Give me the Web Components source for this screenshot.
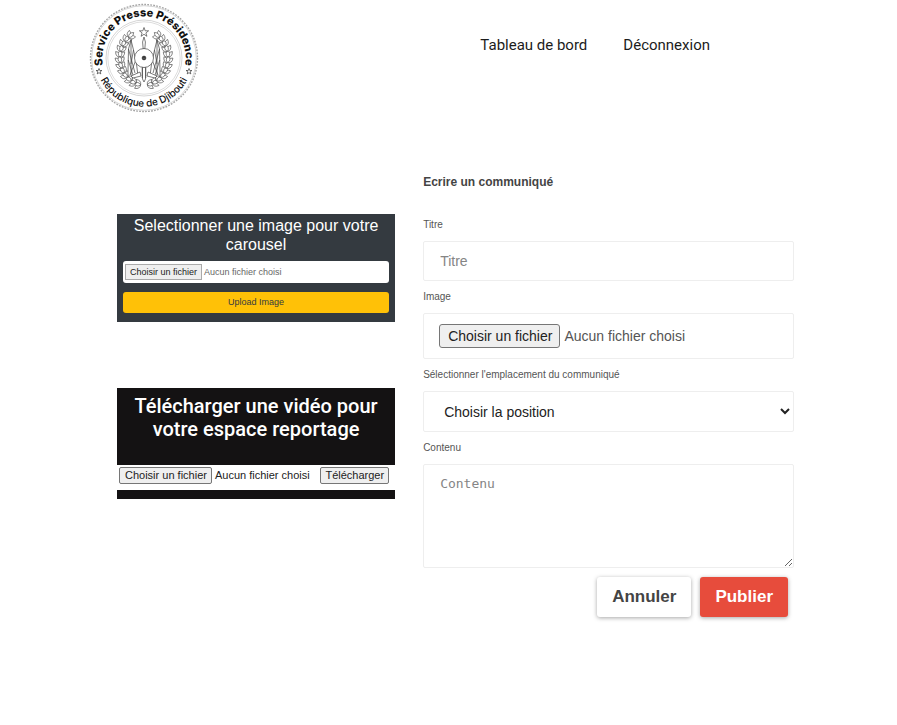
<!DOCTYPE html>
<html lang="fr">
<head>
<meta charset="utf-8">
<meta name="viewport" content="width=device-width, initial-scale=1">
<title>Service Presse Présidence</title>
<style>
  body { margin: 0; background: #fff; color: #444; font-family: "Liberation Sans", Arial, sans-serif; }
</style>
</head>
<body>
<press-page></press-page>
<script>
const define = (name, html, setup) => {
  const tpl = document.createElement('template');
  tpl.innerHTML = html;
  customElements.define(name, class extends HTMLElement {
    connectedCallback() {
      if (this.shadowRoot) return;
      const root = this.attachShadow({ mode: 'open' });
      root.append(tpl.content.cloneNode(true));
      if (setup) setup(this, root);
    }
  });
};

/* Round seal: scalloped edge, lettering on two arcs, emblem in a laurel wreath */
define('press-seal', `
<style>
  :host { display: block; width: 110px; flex: none; }
  svg { display: block; width: 100%; }
  text { fill: #111; font-family: Inter, sans-serif; }
  .top { font-size: 11px; font-weight: 800; }
  .bottom { font-size: 10px; font-weight: 500; }
</style>
<svg viewBox="-55 -55 110 110" role="img" aria-label="Service Presse Présidence, République de Djibouti">
  <defs>
    <path id="arcTop" d="M-40.500 10A41.700 41.700 0 1 1 40.500 10"/>
    <path id="arcBottom" d="M-46.500 14A48.500 48.500 0 0 0 46.500 14"/>
  </defs>
  <g fill="none">
    <circle r="53.5" stroke-width="1.4" stroke-dasharray="1.8 1.2" stroke="#a5a5a5"/>
    <circle r="52.3" stroke-width=".6" stroke="#bbb"/>
    <circle r="38" stroke-width=".5" stroke="#aaa"/>
    <circle r="36.2" stroke-width=".5" stroke="#bbb"/>
  </g>
  <text class="top"><textPath href="#arcTop" startOffset="50%" text-anchor="middle">Service Presse Présidence</textPath></text>
  <text class="bottom"><textPath href="#arcBottom" startOffset="50%" text-anchor="middle">République de Djibouti</textPath></text>
  <g fill="#fff" stroke="#333" stroke-width=".7">
    <path id="st" d="M-45 10.500l.8 2h2.1l-1.7 1.3.6 2.1-1.8-1.2-1.8 1.2.6-2.1-1.7-1.3h2.1z"/>
    <use href="#st" x="90"/>
  </g>
  <g id="wreath" fill="#fff" stroke="#444" stroke-width=".6"></g>
  <g fill="#fff" stroke="#444" stroke-width=".7" stroke-linejoin="round">
    <path d="M0-30.500l1.200 3.300h3.400l-2.700 2.100 1 3.400-2.900-2-2.900 2 1-3.400-2.700-2.100h3.400z"/>
    <path d="M0-21L1.400-16L.8-9H-.8L-1.400-16zM-1.500 9h3v12l-1.500 3-1.500-3z"/>
    <g id="side">
      <path d="M-16 13L-15.500-9L-13-18L-10.500-8L-7.500 6L-6 18H-16z"/>
      <path d="M-13-18V17M-10.500-8L-13 6M-15.500-9L-9 15M-15.800 2L-11 17M-8.500 3L-14 17" fill="none"/>
      <path d="M-13 18L-4 14L-3 18L-11 20z"/>
    </g>
    <use href="#side" transform="scale(-1 1)"/>
    <circle r="9.500"/>
    <circle r="1.900" fill="#111"/><circle r=".6" stroke="none"/>
    <path d="M-1.800 9.500V20M1.800 9.500V20" fill="none"/>
  </g>
</svg>`, (host, root) => {
  const g = root.getElementById('wreath');
  const NS = 'http://www.w3.org/2000/svg';
  const add = (d, transform) => {
    const p = document.createElementNS(NS, 'path');
    p.setAttribute('d', d);
    p.setAttribute('transform', transform);
    g.append(p);
  };
  for (const side of [-1, 1]) {
    for (let i = 0; i < 12; i++) {
      const a = (82 - i * 12) * Math.PI / 180;
      const x = side * 24 * Math.cos(a), y = 27 * Math.sin(a);
      const tilt = Math.atan2(-27 * Math.cos(a), side * 24 * Math.sin(a)) * 180 / Math.PI;
      for (const spread of [-40, 40, 0])
        add('M0 0Q3-3.600 7 0Q3 3.600 0 0z', 'translate(' + x + ' ' + y + ') rotate(' + (tilt + spread) + ')');
    }
  }
});

define('site-header', `
<style>
  :host { display: block; padding: 3px 89px 0; }
  header { display: flex; align-items: flex-start; justify-content: space-between; }
  nav { display: flex; gap: 36px; padding: 32px 98px 0 0; font: 15px/20px Roboto, sans-serif; }
  a { color: #1c1c1c; text-decoration: none; }
</style>
<header>
  <press-seal></press-seal>
  <nav><a href="#tableau">Tableau de bord</a><a href="#deconnexion">Déconnexion</a></nav>
</header>`);

/* File control with a French caption; the native input lies over it */
define('file-picker', `
<style>
  :host { display: block; position: relative; font-size: 11px; line-height: 15px; }
  label { display: flex; align-items: center; gap: var(--pick-gap, 3px); white-space: nowrap; }
  .btn { border: 1px solid var(--pick-border, #767676); border-radius: var(--pick-radius, 2px); background: #efefef; color: #222; padding: var(--pick-pad, 0 4px 0 5px); }
  input { position: absolute; inset: 0; width: 100%; height: 100%; opacity: 0; cursor: pointer; }
</style>
<label for="f"><span class="btn">Choisir un fichier</span><span class="name">Aucun fichier choisi</span></label>
<input id="f" type="file">`, (host, root) => {
  const input = root.querySelector('input');
  input.accept = host.getAttribute('accept') || '';
  input.addEventListener('change', () => {
    root.querySelector('.name').textContent = input.files.length ? input.files[0].name : 'Aucun fichier choisi';
  });
});

define('carousel-upload', `
<style>
  :host { display: block; background: #343a40; padding: 2px 6px 9px; }
  h2 { margin: 0 0 7px; font-size: 16px; line-height: 19px; font-weight: 400; color: #fff; text-align: center; }
  file-picker { background: #fff; border-radius: 3px; padding: 3px 2px; font-size: 9px; line-height: 14px; color: #666; --pick-border: #aaa; --pick-radius: 0; --pick-pad: 0 4px; --pick-gap: 2px; }
  button { display: block; width: 100%; margin-top: 9px; padding: 4px; border: 0; border-radius: 3px; background: #ffc107; color: #343a40; font: 9px/13px "Liberation Sans", Arial, sans-serif; }
</style>
<h2>Selectionner une image pour votre carousel</h2>
<file-picker accept="image/*"></file-picker>
<button type="button">Upload Image</button>`);

define('video-upload', `
<style>
  :host { display: block; background: #141213; padding: 7px 0 9px; }
  h2 { margin: 0 0 24px; padding: 0 12px; font: 500 20px/23px Roboto, sans-serif; color: #fff; text-align: center; }
  .row { display: flex; align-items: center; justify-content: space-between; background: #fff; padding: 2px 6px 6px 2px; }
  file-picker { color: #222; }
  button { border: 1px solid #767676; border-radius: 2px; background: #efefef; color: #222; padding: 0 4px; font: 11px/15px "Liberation Sans", Arial, sans-serif; }
</style>
<h2>Télécharger une vidéo pour votre espace reportage</h2>
<div class="row"><file-picker accept="video/*"></file-picker><button type="button">Télécharger</button></div>`);

define('release-form', `
<style>
  :host { display: block; }
  h1 { margin: 0 0 28px; font-size: 12px; line-height: 16px; color: #444; }
  label { display: block; margin-bottom: 9px; font-size: 10px; line-height: 14px; color: #555; }
  .box { display: block; box-sizing: border-box; width: 100%; margin: 0 0 9px; border: 1px solid #eee; border-radius: 2px; background: #fff; font: 14px/20px "Liberation Sans", Arial, sans-serif; color: #222; outline-color: #999; }
  ::placeholder { color: #858585; opacity: 1; }
  input.box { padding: 9px 16px; }
  file-picker.box { padding: 10px 15px; color: #555; --pick-pad: 1px 7px 1px 8px; --pick-gap: 4px; --pick-radius: 3px; }
  select.box { height: 41px; padding: 9px 0 9px 16px; }
  textarea.box { height: 104px; padding: 9px 16px; font: 13px/20px "DejaVu Sans Mono", monospace; resize: both; }
  .actions { display: flex; justify-content: flex-end; gap: 9px; padding-right: 6px; }
  button { border: 0; border-radius: 3px; padding: 10px 15px; font: bold 17px/20px "Liberation Sans", Arial, sans-serif; box-shadow: 0 1px 4px rgba(0,0,0,.35); }
  .cancel { background: #fff; color: #444; }
  .publish { background: #e74c3c; color: #fff; }
</style>
<form>
  <h1>Ecrire un communiqué</h1>
  <label for="t">Titre</label>
  <input class="box" id="t" type="text" placeholder="Titre">
  <label id="il">Image</label>
  <file-picker class="box" accept="image/*" role="group" aria-labelledby="il"></file-picker>
  <label for="p">Sélectionner l'emplacement du communiqué</label>
  <select class="box" id="p"><option>Choisir la position</option></select>
  <label for="c">Contenu</label>
  <textarea class="box" id="c" placeholder="Contenu"></textarea>
  <div class="actions"><button class="cancel" type="reset">Annuler</button><button class="publish" type="button">Publier</button></div>
</form>`);

define('press-page', `
<style>
  :host { display: block; }
  main { display: grid; grid-template-columns: 3fr 4fr; gap: 28px; align-items: start; padding: 61px 103px 60px 117px; }
  .side { display: grid; gap: 66px; padding-top: 40px; }
</style>
<site-header></site-header>
<main>
  <div class="side"><carousel-upload></carousel-upload><video-upload></video-upload></div>
  <release-form></release-form>
</main>`);
</script>
</body>
</html>
